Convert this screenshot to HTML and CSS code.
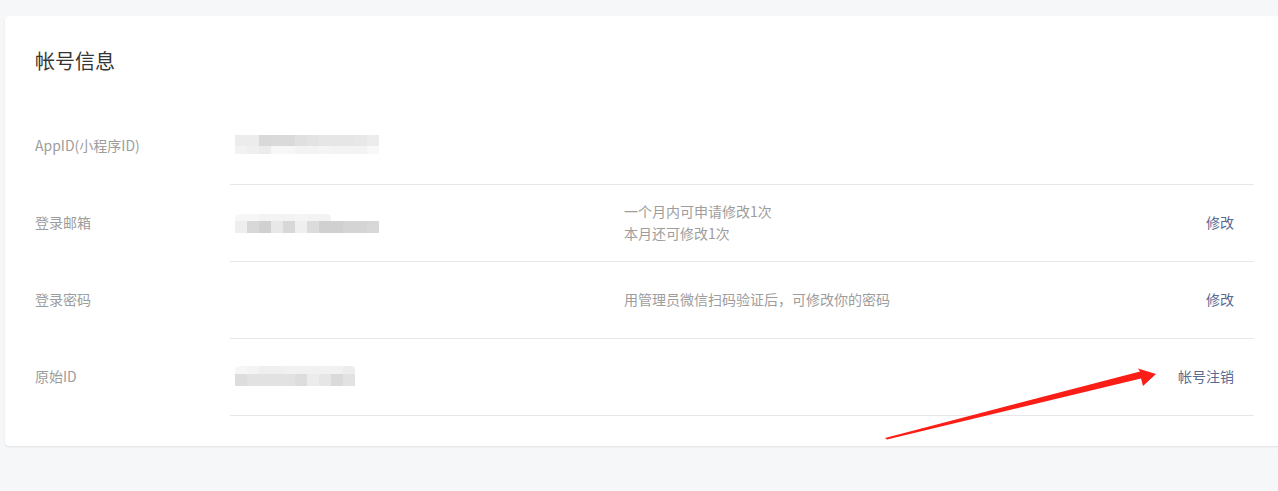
FILE: index.html
```html
<!DOCTYPE html>
<html lang="zh">
<head>
<meta charset="utf-8">
<title>帐号信息</title>
<link rel="stylesheet" href="styles.css">
</head>
<body>
<div class="page">
  <section class="card">
    <h2 class="title">帐号信息</h2>

    <div class="row">
      <div class="label">AppID(小程序ID)</div>
      <div class="cell">
        <div class="value">
          <div class="mosaic m1">
            <span class="ec h12"></span><span class="ec"></span><span class="d9"></span><span class="da"></span><span class="da"></span><span class="e0"></span><span class="e3"></span><span class="e6"></span><span class="e6"></span><span class="e6"></span><span class="e8"></span><span class="ec"></span>
            <span class="f2"></span><span class="ef"></span><span class="ec"></span><span class="f7"></span><span class="f7"></span><span class="f3"></span><span class="f3"></span><span class="f5"></span><span class="f3"></span><span class="f3"></span><span class="f3"></span><span class="f8"></span>
          </div>
        </div>
      </div>
    </div>

    <div class="row">
      <div class="label">登录邮箱</div>
      <div class="cell">
        <div class="value">
          <div class="mosaic m2">
            <span class="f6 tl"></span><span class="f6"></span><span class="f3"></span><span class="f3"></span><span class="f3"></span><span class="f5"></span><span class="f3"></span><span class="f3 tr"></span><span class="wh"></span><span class="wh"></span><span class="wh"></span><span class="wh"></span>
            <span class="ee"></span><span class="d8"></span><span class="d0"></span><span class="e8"></span><span class="d8"></span><span class="ef"></span><span class="dc"></span><span class="d0"></span><span class="d0"></span><span class="d4"></span><span class="d4"></span><span class="d8"></span>
          </div>
        </div>
        <div class="desc">一个月内可申请修改1次<br>本月还可修改1次</div>
        <a class="action" href="#">修改</a>
      </div>
    </div>

    <div class="row">
      <div class="label">登录密码</div>
      <div class="cell">
        <div class="value"></div>
        <div class="desc">用管理员微信扫码验证后，可修改你的密码</div>
        <a class="action" href="#">修改</a>
      </div>
    </div>

    <div class="row">
      <div class="label">原始ID</div>
      <div class="cell">
        <div class="value">
          <div class="mosaic m3">
            <span class="f6 tl"></span><span class="f3"></span><span class="ef"></span><span class="ef"></span><span class="f1"></span><span class="f1"></span><span class="f1"></span><span class="f1"></span><span class="f1"></span><span class="ec tr"></span>
            <span class="dd"></span><span class="e2"></span><span class="e2"></span><span class="e2"></span><span class="e2"></span><span class="dd"></span><span class="ec"></span><span class="e6"></span><span class="da"></span><span class="e2"></span>
          </div>
        </div>
        <div class="desc"></div>
        <a class="action" href="#">帐号注销</a>
      </div>
    </div>
  </section>

  <svg class="arrow" width="1278" height="491" viewBox="0 0 1278 491" aria-hidden="true">
    <polygon points="885,438 1140,371.5 1138,368.5 1156,374 1143,386 1141,378.5 887,439.5" fill="#fb1e16"/>
  </svg>
</div>
</body>
</html>
```

FILE: styles.css
```css
html, body {
  margin: 0;
  padding: 0;
  background: #f6f7f9;
  overflow: hidden;
}

body {
  font-family: "Noto Sans CJK SC", "Noto Sans", sans-serif;
  font-size: 14px;
  color: #353535;
}

.page {
  position: relative;
  width: 1278px;
  height: 491px;
  padding: 16px 0 0 5px;
  box-sizing: border-box;
}

.card {
  width: 1290px;
  box-sizing: border-box;
  padding: 0 41px 30px 30px;
  background: #fff;
  border-radius: 4px;
  box-shadow: 0 1px 2px rgba(0, 0, 0, 0.09);
}

.title {
  margin: 0 0 32px;
  padding-top: 31px;
  padding-bottom: 1px;
  font-size: 20px;
  line-height: 28px;
  font-weight: 400;
  color: #353535;
}

.row {
  display: flex;
  height: 77px;
}

.label {
  width: 195px;
  flex: none;
  display: flex;
  align-items: center;
  color: #9d9d9d;
  line-height: 22px;
  padding-bottom: 4px;
  box-sizing: border-box;
}

.cell {
  flex: 1;
  display: flex;
  align-items: center;
  border-bottom: 1px solid #e7e7e7;
  padding: 0 20px 2px 5px;
}

.value {
  width: 389px;
  flex: none;
}

.desc {
  flex: 1;
  color: #9d9d9d;
  line-height: 22px;
}

.action {
  color: #576b95;
  text-decoration: none;
  line-height: 22px;
}

.mosaic {
  display: grid;
  grid-template-columns: repeat(12, 12px);
}

.m1 {
  grid-template-rows: 11px 8px;
  margin-top: -2px;
}

.m2 {
  grid-template-rows: 7px 12px;
  margin-top: 3px;
}

.m3 {
  grid-template-columns: repeat(10, 12px);
  grid-template-rows: 8px 12px;
  margin-top: 0;
}

.tl { border-top-left-radius: 6px 4px; }
.tr { border-top-right-radius: 4px; }

.wh { background: #fff; }
.d0 { background: #d0d0d0; }
.d4 { background: #d4d4d4; }
.d8 { background: #d8d8d8; }
.d9 { background: #d9d9d9; }
.da { background: #dadada; }
.dc { background: #dcdcdc; }
.dd { background: #dddddd; }
.e0 { background: #e0e0e0; }
.e2 { background: #e2e2e2; }
.e3 { background: #e3e3e3; }
.e6 { background: #e6e6e6; }
.e8 { background: #e8e8e8; }
.ec { background: #ececec; }
.ee { background: #eeeeee; }
.ef { background: #efefef; }
.f1 { background: #f1f1f1; }
.f2 { background: #f2f2f2; }
.f3 { background: #f3f3f3; }
.f5 { background: #f5f5f5; }
.f6 { background: #f6f6f6; }
.f7 { background: #f7f7f7; }
.f8 { background: #f8f8f8; }

.arrow {
  position: absolute;
  left: 0;
  top: 0;
  pointer-events: none;
}
```
